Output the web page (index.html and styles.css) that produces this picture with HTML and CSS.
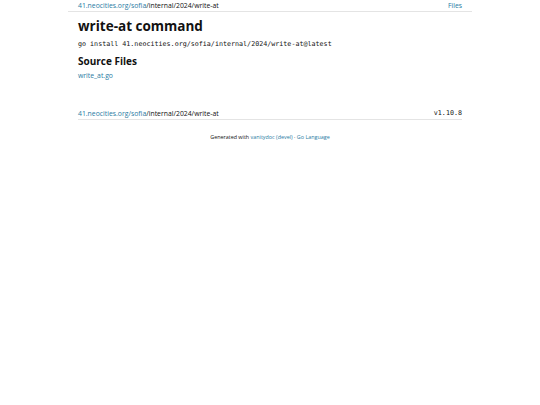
FILE: index.html
```html
<!DOCTYPE html>
<html>
<head>
<meta charset="utf-8">
<link rel="stylesheet" href="styles.css">
</head>
<body>
<div class="page">
  <header class="top">
    <div class="crumbs"><a href="#">41.neocities.org/sofia</a>/internal/2024/write-at</div>
    <a href="#" class="files">Files</a>
  </header>
  <main class="content">
    <h1>write-at command</h1>
    <pre class="install">go install 41.neocities.org/sofia/internal/2024/write-at@latest</pre>
    <h2>Source Files</h2>
    <div class="srcs"><a href="#">write_at.go</a></div>
    <div class="foot">
      <div class="crumbs"><a href="#">41.neocities.org/sofia</a>/internal/2024/write-at</div>
      <span class="ver">v1.10.8</span>
    </div>
  </main>
  <footer class="gen">Generated with <a href="#">vanitydoc (devel)</a> · <a href="#">Go Language</a></footer>
</div>
</body>
</html>
```
FILE: styles.css
```css
html, body { margin: 0; padding: 0; background: #fff; }
body { font-family: "Open Sans", "Noto Sans", sans-serif; color: #111; }
a { color: #2a7ba3; text-decoration: none; }
.page { width: 404px; margin: 0 auto; }
.top {
  display: flex; justify-content: space-between; align-items: center;
  padding: 0 10px; height: 11px; border-bottom: 1px solid #e4e4e4;
  font-size: 6.85px; line-height: 11px;
}
.content { padding: 0 10px; }
h1 { font-size: 13.5px; font-weight: 700; margin: 4px 0 3px; line-height: 20px; }
.install { font-family: "DejaVu Sans Mono", monospace; font-size: 6.7px; margin: 0 0 5px; line-height: 10px; }
h2 { font-size: 10px; font-weight: 700; margin: 0 0 3px; line-height: 14px; }
.srcs { font-size: 6.85px; line-height: 10px; }
.foot {
  display: flex; justify-content: space-between; align-items: center;
  margin-top: 27px; border-bottom: 1px solid #e4e4e4;
  font-size: 6.85px; line-height: 11px;
}
.ver { font-family: "DejaVu Sans Mono", monospace; font-size: 6.7px; }
.gen { text-align: center; font-size: 5.4px; margin-top: 13px; line-height: 8px; }
```
